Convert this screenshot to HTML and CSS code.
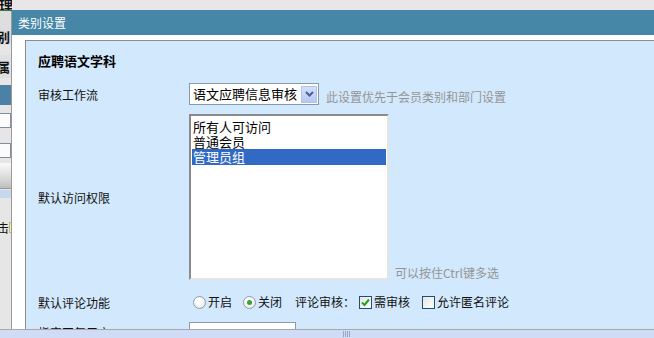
FILE: index.html
```html
<!DOCTYPE html>
<html lang="zh">
<head>
<meta charset="utf-8">
<title>类别设置</title>
<link rel="stylesheet" href="styles.css">
</head>
<body>
<div class="topbar"><span class="topchar">理</span></div>
<div class="main">
  <div class="backstrip">
    <div class="bs-top"></div>
    <div class="bs-a"><span class="bchar">别</span></div>
    <div class="bs-b"><span class="bchar">属</span></div>
    <div class="bs-bar"></div>
    <div class="bs-input"></div>
    <div class="bs-input bs-input2"></div>
    <div class="bs-btn"></div>
    <div class="bs-light"></div>
    <div class="bs-c"><span class="schar">击</span><span class="yel"></span></div>
  </div>
  <div class="dialog">
    <div class="titlebar">类别设置</div>
    <div class="dbody">
      <div class="panel">
        <div class="heading">应聘语文学科</div>
        <div class="row r1">
          <div class="label">审核工作流</div>
          <div class="ctrl ctrl-end">
            <div class="select">
              <span class="selval">语文应聘信息审核</span>
              <span class="dd"><svg width="9" height="6" viewBox="0 0 9 6"><path d="M1 1 L4.5 4.5 L8 1" fill="none" stroke="#4a5f8c" stroke-width="2"/></svg></span>
            </div>
            <span class="hint hint1">此设置优先于会员类别和部门设置</span>
          </div>
        </div>
        <div class="row r2">
          <div class="label">默认访问权限</div>
          <div class="ctrl ctrl-end">
            <div class="listbox">
              <div class="opt">所有人可访问</div>
              <div class="opt">普通会员</div>
              <div class="opt sel">管理员组</div>
            </div>
            <span class="hint hint2">可以按住Ctrl键多选</span>
          </div>
        </div>
        <div class="row r3">
          <div class="label">默认评论功能</div>
          <div class="ctrl opts">
            <span class="radio"></span><span class="otext">开启</span>
            <span class="radio on"></span><span class="otext">关闭</span>
            <span class="otext sub">评论审核：</span>
            <span class="check on"><svg width="11" height="11" viewBox="0 0 11 11"><path d="M2 5.5 L4.5 8 L9 2.5" fill="none" stroke="#21a121" stroke-width="2"/></svg></span><span class="otext">需审核</span>
            <span class="check check2"></span><span class="otext">允许匿名评论</span>
          </div>
        </div>
        <div class="row r4">
          <div class="label">指定回复用户</div>
          <div class="ctrl"><div class="textbox"></div></div>
        </div>
      </div>
    </div>
  </div>
</div>
<div class="hscroll"><span class="grip"></span></div>
</body>
</html>
```
FILE: styles.css
```css
* { box-sizing: border-box; }
html, body {
  margin: 0;
  padding: 0;
}
body {
  width: 654px;
  height: 338px;
  overflow: hidden;
  display: flex;
  flex-direction: column;
  background: #e8e6e6;
  font-family: "Noto Sans CJK SC", "DejaVu Sans", sans-serif;
  font-size: 12px;
  color: #111;
}
.topbar {
  height: 10px;
  flex: none;
  background: #e8e6e6;
  position: relative;
}
.topchar {
  display: block;
  width: 13px;
  margin-left: -1px;
  font-weight: bold;
  font-size: 14px;
  line-height: 10px;
  height: 11px;
  overflow: hidden;
  border-bottom: 1px solid #2f7a3a;
  color: #111;
}
.main {
  flex: none;
  height: 319px;
  display: flex;
  overflow: hidden;
}
.backstrip {
  width: 11px;
  flex: none;
  background: #e6e6e6;
  display: flex;
  flex-direction: column;
  overflow: hidden;
}
.bs-top { height: 18px; background: #dedede; }
.bs-a { height: 17px; background: #d9dce1; display: flex; align-items: center; }
.bs-b { height: 23px; margin-top: 10px; background: #dfe0e2; display: flex; align-items: center; }
.bchar { font-weight: bold; font-size: 13px; margin-left: -3px; color: #111; white-space: nowrap; }
.bs-bar { height: 20px; margin-top: 7px; background: #4a81a5; }
.bs-input { height: 15px; margin-top: 8px; background: #fbfbfb; border: 1px solid #7f8f9f; border-left: none; }
.bs-input2 { margin-top: 15px; }
.bs-btn { height: 26px; margin-top: 5px; background: linear-gradient(#fafafa, #d4d4d4 70%, #bdbdbd); border-bottom: 1px solid #9a9a9a; }
.bs-light { height: 8px; margin-top: 1px; background: #c5d8ec; }
.bs-c { height: 13px; margin-top: 23px; display: flex; align-items: center; }
.schar { font-size: 12px; margin-left: -3px; line-height: 13px; }
.yel { width: 3px; height: 11px; background: #f6f0b0; border: 1px solid #c8b860; border-right: none; }

.dialog {
  flex: 1;
  display: flex;
  flex-direction: column;
  border-left: 1px solid #9a9a9a;
  background: #fff;
  min-width: 0;
}
.titlebar {
  height: 25px;
  flex: none;
  background: #4686a7;
  color: #fff;
  font-size: 12px;
  line-height: 25px;
  padding-left: 6px;
}
.dbody {
  flex: 1;
  background: #fff;
  padding: 5px 0 0 13px;
  display: flex;
}
.panel {
  flex: 1;
  background: #d2e8fc;
  border-top: 1px solid #8c8c8c;
  border-left: 1px solid #8c8c8c;
  padding: 12px 0 0 12px;
}
.heading {
  font-weight: bold;
  font-size: 13px;
  line-height: 16px;
  height: 16px;
  margin-bottom: 14px;
  color: #000;
}
.row {
  display: flex;
}
.label {
  width: 151px;
  flex: none;
  display: flex;
  align-items: center;
  font-size: 12px;
  color: #111;
}
.ctrl {
  display: flex;
  align-items: center;
}
.ctrl-end { align-items: flex-end; }
.r1 { height: 22px; }
.r2 { height: 166px; margin-top: 9px; }
.r3 { height: 20px; margin-top: 12px; }
.r4 { height: 22px; margin-top: 10px; align-items: flex-start; }
.r4 .label { align-items: flex-start; padding-top: 2px; }

.select {
  width: 130px;
  height: 22px;
  background: #fff;
  border: 1px solid #8899aa;
  display: flex;
  align-items: center;
  justify-content: space-between;
  padding-left: 3px;
  padding-right: 1px;
}
.selval { font-size: 13px; line-height: 16px; color: #000; }
.dd {
  width: 16px;
  height: 17px;
  background: linear-gradient(#d3e0fc, #b6c8f4);
  border: 1px solid #b3c4ea;
  display: flex;
  align-items: center;
  justify-content: center;
}
.hint {
  color: #959595;
  font-size: 12px;
  line-height: 14px;
}
.hint1 { margin-left: 7px; margin-bottom: 1px; }
.hint2 { margin-left: 6px; margin-bottom: 0; }

.listbox {
  width: 200px;
  height: 166px;
  background: #fff;
  border: 2px solid;
  border-color: #8a8a8a #e4e4e4 #e4e4e4 #8a8a8a;
  padding: 3px 1px 0 1px;
}
.opt {
  font-size: 13px;
  line-height: 15px;
  height: 15px;
  padding-left: 1px;
  color: #000;
  white-space: nowrap;
}
.opt.sel {
  background: #316ac5;
  color: #fff;
  height: 16px;
  line-height: 16px;
}

.opts { padding-left: 4px; }
.radio {
  width: 13px;
  height: 13px;
  border-radius: 50%;
  border: 1px solid #8e9cb0;
  background: radial-gradient(circle at 40% 35%, #ffffff 30%, #dcdcd6 100%);
  display: inline-flex;
  align-items: center;
  justify-content: center;
  flex: none;
}
.radio.on::after {
  content: "";
  width: 5px;
  height: 5px;
  border-radius: 50%;
  background: #35a235;
}
.otext {
  margin-left: 2px;
  margin-right: 11px;
  font-size: 12px;
  line-height: 14px;
  white-space: nowrap;
}
.otext.sub { margin-left: 2px; margin-right: 4px; }
.check {
  width: 13px;
  height: 13px;
  border: 1px solid #1c4f7e;
  background: linear-gradient(135deg, #e6e6e0, #ffffff);
  display: inline-flex;
  align-items: center;
  justify-content: center;
  flex: none;
}
.check2 { margin-left: 1px; }

.textbox {
  width: 107px;
  height: 22px;
  background: #fff;
  border: 1px solid #8c9aaa;
}

.hscroll {
  flex: none;
  height: 9px;
  border-top: 1px solid #a8a8a8;
  background: #d0dcf6;
  position: relative;
  display: flex;
  align-items: center;
}
.grip {
  margin-left: 343px;
  width: 7px;
  height: 6px;
  background: repeating-linear-gradient(90deg, #97a6c2 0 1px, transparent 1px 2px);
}
```
